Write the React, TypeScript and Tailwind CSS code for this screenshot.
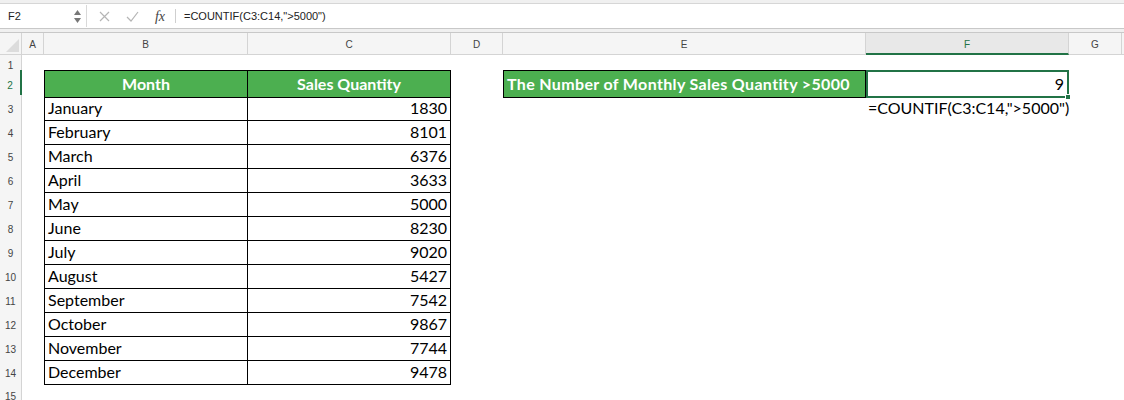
import React from 'react';

const months: [string, number][] = [
  ['January', 1830],
  ['February', 8101],
  ['March', 6376],
  ['April', 3633],
  ['May', 5000],
  ['June', 8230],
  ['July', 9020],
  ['August', 5427],
  ['September', 7542],
  ['October', 9867],
  ['November', 7744],
  ['December', 9478],
];

const cols = 'grid grid-cols-[22px_22px_204px_203px_52px_363px_203px_53px_1fr]';
const cellFont = { fontFamily: 'Lato, "Open Sans", sans-serif' };

function RowHead({ n, active }: { n: number; active?: boolean }) {
  return (
    <div
      className={`flex items-center justify-center pt-[3px] bg-[#f5f5f5] border-b border-[#e1e1e1] text-[10px] ${
        active ? 'border-r-2 border-r-[#217346] text-[#217346]' : 'border-r border-r-[#d4d4d4] text-[#444]'
      }`}
      style={{ fontFamily: '"Liberation Sans", Arial, sans-serif' }}
    >
      {n}
    </div>
  );
}

export default function App() {
  return (
    <div className="w-[1124px] h-[400px] overflow-hidden bg-white text-black" style={cellFont}>
      {/* top strip */}
      <div className="h-[4px] bg-[#f0f0f0] border-b border-[#d6d6d6]" />

      {/* formula bar */}
      <div
        className="h-[24px] flex items-center bg-white text-[11px] text-[#222]"
        style={{ fontFamily: '"Liberation Sans", Arial, sans-serif' }}
      >
        <div className="w-[68px] pl-[8px]">F2</div>
        <div className="w-[19px] flex flex-col items-center justify-center gap-[3px] border-r border-[#d9d9d9] h-[22px]">
          <svg width="7" height="5" viewBox="0 0 7 5"><path d="M3.5 0L7 5H0z" fill="#777" /></svg>
          <svg width="7" height="5" viewBox="0 0 7 5"><path d="M0 0h7L3.5 5z" fill="#777" /></svg>
        </div>
        <div className="w-[30px] flex justify-center ml-[2px]">
          <svg width="11" height="11" viewBox="0 0 11 11">
            <path d="M1 1l9 9M10 1l-9 9" stroke="#b5b5b5" strokeWidth="1.2" />
          </svg>
        </div>
        <div className="w-[26px] flex justify-center">
          <svg width="13" height="11" viewBox="0 0 13 11">
            <path d="M1 6l4 4 7-9" stroke="#b5b5b5" strokeWidth="1.2" fill="none" />
          </svg>
        </div>
        <div
          className="w-[30px] text-center italic text-[14px] text-[#444]"
          style={{ fontFamily: '"Liberation Serif", "Times New Roman", serif' }}
        >
          fx
        </div>
        <div className="w-px h-[14px] bg-[#cfcfcf]" />
        <div className="pl-[8px]">=COUNTIF(C3:C14,"&gt;5000")</div>
      </div>

      {/* separator band */}
      <div className="h-[5px] bg-[#f0f0f0] border-t border-b border-[#c8c8c8]" />

      {/* column headers */}
      <div
        className={`${cols} h-[22px] bg-[#f5f5f5] text-[10px] text-[#444]`}
        style={{ fontFamily: '"Liberation Sans", Arial, sans-serif' }}
      >
        <div className="border-r border-b border-[#d4d4d4] relative overflow-hidden">
          <svg className="absolute right-[2px] bottom-[2px]" width="13" height="13" viewBox="0 0 13 13">
            <path d="M13 0V13H0z" fill="#dcdcdc" />
          </svg>
        </div>
        {['A', 'B', 'C', 'D', 'E'].map((c) => (
          <div key={c} className="flex items-center justify-center pt-[2px] border-r border-b border-[#d4d4d4]">
            {c}
          </div>
        ))}
        <div className="flex items-center justify-center pt-[2px] border-r border-[#d4d4d4] border-b-2 border-b-[#217346] bg-[#e8e8e8] text-[#217346]">
          F
        </div>
        <div className="flex items-center justify-center pt-[2px] border-r border-b border-[#d4d4d4]">G</div>
        <div className="border-b border-[#d4d4d4]" />
      </div>

      {/* row 1 */}
      <div className={`${cols} h-[15px]`}>
        <RowHead n={1} />
      </div>

      {/* row 2 */}
      <div className={`${cols} h-[25px] text-[16px]`}>
        <RowHead n={2} active />
        <div />
        <div className="flex items-center justify-center bg-[#4caf50] text-white font-bold border border-black">
          Month
        </div>
        <div className="flex items-center justify-center bg-[#4caf50] text-white font-bold border-y border-r border-black">
          Sales Quantity
        </div>
        <div />
        <div className="flex items-center pl-[3px] bg-[#4caf50] text-white font-bold tracking-[0.35px] border border-black whitespace-nowrap">
          The Number of Monthly Sales Quantity &gt;5000
        </div>
        <div className="relative flex items-center justify-end pr-[3px] border-2 border-[#217346]">
          9
          <div className="absolute right-[-4px] bottom-[-4px] w-[6px] h-[6px] bg-[#217346] border border-white" />
        </div>
        <div />
      </div>

      {/* data rows */}
      {months.map(([m, q], i) => (
        <div key={m} className={`${cols} h-[24px] text-[16px]`}>
          <RowHead n={i + 3} />
          <div />
          <div className="flex items-center pl-[3px] pt-[1px] border-x border-b border-black">{m}</div>
          <div className="flex items-center justify-end pr-[3px] pt-[1px] border-r border-b border-black">{q}</div>
          <div />
          <div />
          <div className="flex items-center pl-[2px] whitespace-nowrap">
            {i === 0 ? '=COUNTIF(C3:C14,">5000")' : ''}
          </div>
          <div />
        </div>
      ))}

      {/* row 15 */}
      <div className={`${cols} h-[24px]`}>
        <RowHead n={15} />
      </div>
    </div>
  );
}
